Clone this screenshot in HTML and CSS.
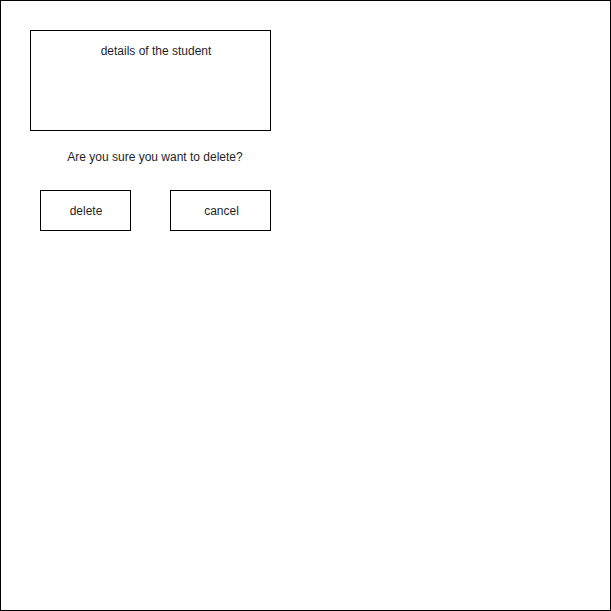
FILE: index.html
```html
<!DOCTYPE html>
<html>
<head>
<meta charset="utf-8">
<link rel="stylesheet" href="styles.css">
</head>
<body>
<div class="frame">
  <div class="details">details of the student</div>
  <div class="question">Are you sure you want to delete?</div>
  <div class="actions">
    <div class="btn btn-delete">delete</div>
    <div class="btn btn-cancel">cancel</div>
  </div>
</div>
</body>
</html>
```

FILE: styles.css
```css
html, body {
  margin: 0;
  padding: 0;
  background: #ffffff;
}
body {
  font-family: "Liberation Sans", Arial, sans-serif;
  font-size: 12px;
  line-height: 14px;
  color: #1f1f1f;
}
.frame {
  box-sizing: border-box;
  width: 611px;
  height: 611px;
  border: 1px solid #000;
  padding-top: 29px;
}
.details {
  box-sizing: border-box;
  margin-left: 29px;
  width: 241px;
  height: 101px;
  border: 1px solid #000;
  padding-top: 13px;
  padding-left: 11px;
  text-align: center;
}
.question {
  box-sizing: border-box;
  margin-left: 29px;
  width: 241px;
  margin-top: 19px;
  padding-left: 9px;
  text-align: center;
}
.actions {
  display: flex;
  gap: 39px;
  margin-top: 26px;
  margin-left: 39px;
}
.btn {
  box-sizing: border-box;
  height: 41px;
  border: 1px solid #000;
  display: flex;
  align-items: center;
  justify-content: center;
  padding-top: 1px;
}
.btn-delete {
  width: 91px;
  padding-left: 1px;
}
.btn-cancel {
  width: 101px;
  padding-left: 2px;
}
```
